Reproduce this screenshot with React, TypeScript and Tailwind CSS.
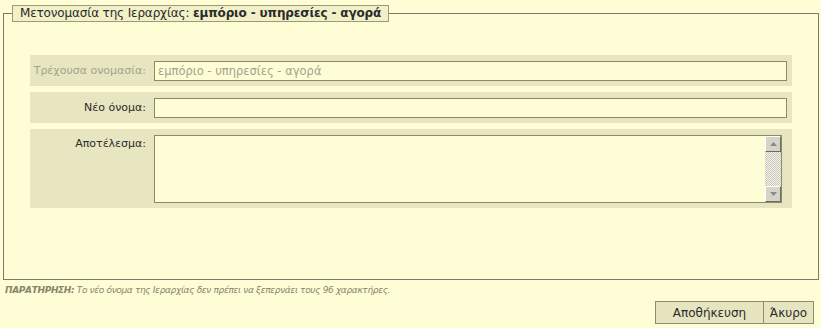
import React from 'react';

const font = { fontFamily: '"DejaVu Sans", Verdana, sans-serif' };

function ScrollArrow({ up }: { up?: boolean }) {
  return (
    <div className="w-[16px] h-[16px] bg-[#d6d3c9] border-t border-l border-t-white border-l-white border-b border-r border-b-[#6b6b6b] border-r-[#6b6b6b] flex items-center justify-center">
      <svg width="7" height="4" viewBox="0 0 7 4">
        {up ? (
          <polygon points="3.5,0 7,4 0,4" fill="#8a8a8a" />
        ) : (
          <polygon points="0,0 7,0 3.5,4" fill="#8a8a8a" />
        )}
      </svg>
    </div>
  );
}

function Row({
  label,
  muted,
  top,
  children,
}: {
  label: string;
  muted?: boolean;
  top?: boolean;
  children: React.ReactNode;
}) {
  return (
    <div className={`flex bg-[#e7e6c1] pt-[6px] pb-[5px] pr-[5px] ${top ? 'items-start' : 'items-center'}`}>
      <div
        className={`w-[124px] shrink-0 pr-[8px] text-right text-[11px] ${top ? 'pt-[1px]' : ''} ${
          muted ? 'text-[#a3a389]' : 'text-[#2b2b2b]'
        }`}
      >
        {label}
      </div>
      {children}
    </div>
  );
}

export default function App() {
  return (
    <div className="w-[821px] h-[328px] bg-[#fefdd6] overflow-hidden pt-[5px]" style={font}>
      <fieldset className="ml-[3px] mr-[2px] h-[275px] border border-[#7a7a6c]">
        <legend className="ml-[8px] h-[17px] px-[7px] bg-[#f1f0c7] border border-[#9b9b78] text-[12px] leading-[15px] tracking-[-0.15px] text-[#2b2b2b]">
          Μετονομασία της Ιεραρχίας: <b>εμπόριο - υπηρεσίες - αγορά</b>
        </legend>

        <div className="flex flex-col gap-[6px] pl-[26px] pr-[26px] pt-[33px]">
          <Row label="Τρέχουσα ονομασία:" muted>
            <div className="flex-1 h-[20px] border border-[#8b8b68] bg-[#fefdd6] px-[3px] text-[11.5px] leading-[18px] text-[#a3a389]">
              εμπόριο - υπηρεσίες - αγορά
            </div>
          </Row>
          <Row label="Νέο όνομα:">
            <input
              className="flex-1 h-[20px] border border-[#8b8b68] bg-[#fefdd6] px-[3px] text-[11px] outline-none"
              style={font}
            />
          </Row>
          <Row label="Αποτέλεσμα:" top>
            <div className="flex w-[628px] h-[68px] border border-[#8b8b68] bg-[#fefdd6]">
              <textarea className="flex-1 resize-none bg-transparent outline-none text-[11px] p-[2px]" style={font} />
              <div className="w-[16px] flex flex-col bg-[repeating-conic-gradient(#c8c6bd_0_25%,#f4f3ee_0_50%)] bg-[length:2px_2px]">
                <ScrollArrow up />
                <div className="flex-1" />
                <ScrollArrow />
              </div>
            </div>
          </Row>
        </div>
      </fieldset>

      <div className="pl-[5px] pt-[4px] text-[9px] italic text-[#86866a] leading-[12px] tracking-[-0.35px]">
        <b>ΠΑΡΑΤΗΡΗΣΗ:</b> Το νέο όνομα της Ιεραρχίας δεν πρέπει να ξεπερνάει τους 96 χαρακτήρες.
      </div>

      <div className="flex justify-end pr-[7px] pt-[5px]">
        <button className="w-[109px] h-[23px] bg-[#e6e5c0] border border-[#8e8e6a] text-[12px] text-[#2b2b2b]" style={font}>
          Αποθήκευση
        </button>
        <button className="w-[50px] h-[23px] bg-[#e6e5c0] border border-[#8e8e6a] border-l-0 text-[12px] text-[#2b2b2b]" style={font}>
          Άκυρο
        </button>
      </div>
    </div>
  );
}
